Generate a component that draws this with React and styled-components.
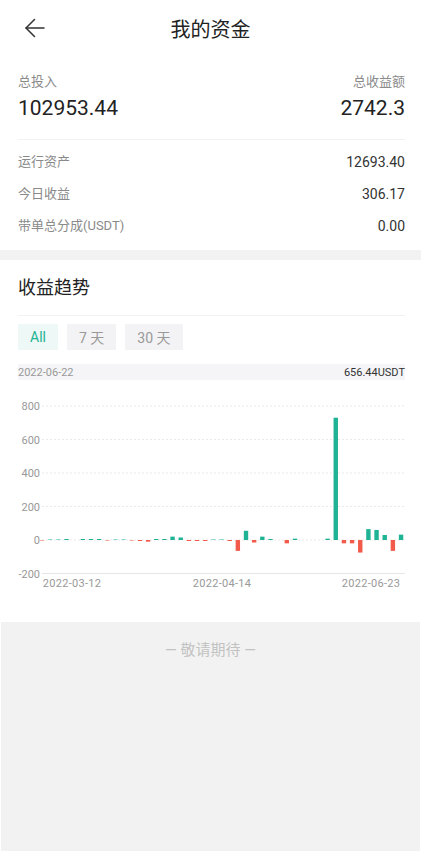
import { useState } from "react";
import styled, { createGlobalStyle } from "styled-components";

const GlobalStyle = createGlobalStyle`
  body {
    margin: 0;
    background: #fff;
    font-family: Roboto, "Noto Sans CJK SC", sans-serif;
  }
`;

const Page = styled.div`
  min-height: 851px;
  display: flex;
  flex-direction: column;
`;

const Header = styled.header`
  height: 56px;
  display: flex;
  align-items: center;
  justify-content: center;
  position: relative;
`;

const BackButton = styled.button`
  position: absolute;
  left: 24px;
  top: 17px;
  width: 22px;
  height: 22px;
  padding: 0;
  border: none;
  background: none;
  display: flex;
`;

const Title = styled.h1`
  margin: 0;
  font-size: 20px;
  font-weight: 400;
  color: #222;
`;

const Section = styled.section`
  padding: 0 16px 0 18px;
`;

const Summary = styled.div`
  display: flex;
  justify-content: space-between;
  padding: 17px 0 17px;
  border-bottom: 1px solid #f2f2f2;
`;

const SummaryCol = styled.div`
  display: flex;
  flex-direction: column;
  gap: 3px;
  align-items: ${(p) => (p.$right ? "flex-end" : "flex-start")};
`;

const Label = styled.span`
  font-size: 13px;
  line-height: 18px;
  color: #8a8a8a;
`;

const BigValue = styled.span`
  font-size: 21px;
  line-height: 28px;
  color: #222;
`;

const Rows = styled.div`
  padding: 6px 0 8px;
`;

const Row = styled.div`
  height: 32px;
  display: flex;
  align-items: center;
  justify-content: space-between;
`;

const RowValue = styled.span`
  font-size: 14px;
  color: #333;
`;

const Band = styled.div`
  height: 10px;
  background: #f2f2f2;
`;

const SectionTitle = styled.h2`
  margin: 15px 0 0;
  font-size: 18px;
  font-weight: 400;
  line-height: 26px;
  color: #222;
  padding-bottom: 14px;
  border-bottom: 1px solid #f2f2f2;
`;

const Tabs = styled.div`
  display: flex;
  gap: 9px;
  margin-top: 8px;
`;

const Tab = styled.button`
  height: 26px;
  padding: 0 12px;
  border: none;
  font-family: inherit;
  font-size: 14px;
  background: ${(p) => (p.$active ? "#eef8f6" : "#f3f3f5")};
  color: ${(p) => (p.$active ? "#1db394" : "#999")};
`;

const InfoBar = styled.div`
  margin-top: 14px;
  height: 16px;
  display: flex;
  align-items: center;
  justify-content: space-between;
  background: #f5f5f7;
  font-size: 11px;
`;

const InfoDate = styled.span`
  color: #999;
`;

const InfoValue = styled.span`
  color: #333;
`;

const Chart = styled.svg`
  display: block;
  margin-bottom: 22px;
  font-family: Roboto, sans-serif;
`;

const Soon = styled.div`
  flex: 1;
  background: #f2f2f2;
  margin: 0 1px;
  padding-top: 18px;
  text-align: center;
  font-size: 15px;
  line-height: 20px;
  color: #c2c2c2;
`;

const bars = [
  -2, 2, 2, 3, 0, 3, 3, 3, -2, 1, 2, -2, -5, -10, 3, 4, 20, 15, -4, -4,
  -4, 2, 2, -3, -65, 55, -15, 20, 3, 0, -20, 8, 0, 0, 0, 8, 730, -20, -20,
  -75, 65, 60, 30, -65, 32,
];

const ZERO = 160;
const SCALE = 33.5 / 200;
const TEAL = "#1db394";
const RED = "#f25b4c";

function TrendChart() {
  const ticks = [800, 600, 400, 200, 0];
  return (
    <Chart width="387" height="220" viewBox="0 0 387 220">
      {ticks.map((t) => {
        const y = ZERO - t * SCALE;
        return (
          <g key={t}>
            <line x1="24" x2="387" y1={y} y2={y} stroke="#e9e9e9" strokeDasharray="2 2" />
            <text x="22" y={y + 4} textAnchor="end" fontSize="11" fill="#999">
              {t}
            </text>
          </g>
        );
      })}
      <line x1="24" x2="387" y1={ZERO + 33.5} y2={ZERO + 33.5} stroke="#e6e6e6" />
      <text x="22" y={ZERO + 33.5 + 4} textAnchor="end" fontSize="11" fill="#999">
        -200
      </text>
      {bars.map((v, i) => {
        const cx = 24 + i * 8.16;
        const h = Math.max(Math.abs(v) * SCALE, 1);
        if (v === 0) return null;
        return (
          <rect
            key={i}
            x={cx - 2.2}
            width="4.4"
            y={v > 0 ? ZERO - h : ZERO}
            height={h}
            fill={v > 0 ? TEAL : RED}
            opacity={Math.abs(v) < 3 ? 0.5 : 1}
          />
        );
      })}
      <g fontSize="11" fill="#999" textAnchor="middle" letterSpacing="0.3">
        <text x="54" y="207">2022-03-12</text>
        <text x="204" y="207">2022-04-14</text>
        <text x="353" y="207">2022-06-23</text>
      </g>
    </Chart>
  );
}

export default function App() {
  const [range, setRange] = useState("all");
  const rows = [
    ["运行资产", "12693.40"],
    ["今日收益", "306.17"],
    ["带单总分成(USDT)", "0.00"],
  ];

  return (
    <Page>
      <GlobalStyle />
      <Header>
        <BackButton aria-label="back">
          <svg width="22" height="22" viewBox="0 0 22 22" fill="none" stroke="#333" strokeWidth="1.5" strokeLinecap="round" strokeLinejoin="round">
            <path d="M20 11H2" />
            <path d="M10.5 2.5 2 11l8.5 8.5" />
          </svg>
        </BackButton>
        <Title>我的资金</Title>
      </Header>

      <Section>
        <Summary>
          <SummaryCol>
            <Label>总投入</Label>
            <BigValue>102953.44</BigValue>
          </SummaryCol>
          <SummaryCol $right>
            <Label>总收益额</Label>
            <BigValue>2742.3</BigValue>
          </SummaryCol>
        </Summary>
        <Rows>
          {rows.map(([k, v]) => (
            <Row key={k}>
              <Label>{k}</Label>
              <RowValue>{v}</RowValue>
            </Row>
          ))}
        </Rows>
      </Section>

      <Band />

      <Section>
        <SectionTitle>收益趋势</SectionTitle>
        <Tabs>
          <Tab $active={range === "all"} onClick={() => setRange("all")}>All</Tab>
          <Tab $active={range === "7"} onClick={() => setRange("7")}>7 天</Tab>
          <Tab $active={range === "30"} onClick={() => setRange("30")}>30 天</Tab>
        </Tabs>
        <InfoBar>
          <InfoDate>2022-06-22</InfoDate>
          <InfoValue>656.44USDT</InfoValue>
        </InfoBar>
        <TrendChart />
      </Section>

      <Soon>— 敬请期待 —</Soon>
    </Page>
  );
}
